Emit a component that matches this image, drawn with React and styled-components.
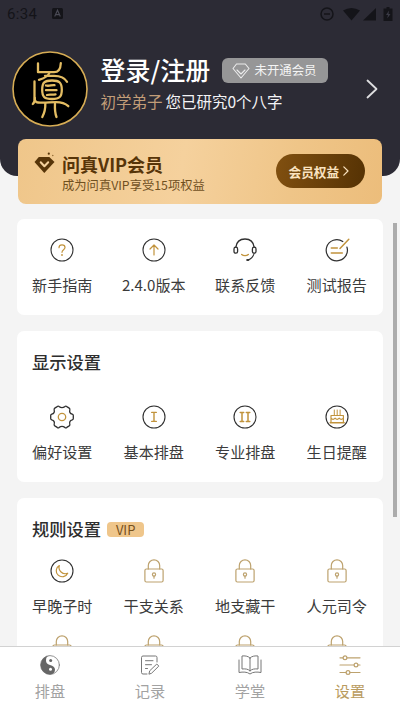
import React from "react";
import styled, { createGlobalStyle } from "styled-components";

const GlobalStyle = createGlobalStyle`
  * { box-sizing: border-box; }
  body {
    margin: 0;
    background: #f4f4f4;
    font-family: "Noto Sans CJK SC", sans-serif;
  }
  svg { display: block; flex: none; overflow: visible; }
`;

const Screen = styled.div`
  width: 400px;
  height: 710px;
  display: flex;
  flex-direction: column;
  overflow: hidden;
  background: #f4f4f4;
`;

const Header = styled.header`
  flex: none;
  height: 176px;
  border-radius: 0 0 17px 17px;
  background: #2c2b35;
`;

const StatusBar = styled.div`
  height: 28px;
  display: flex;
  align-items: center;
  padding: 0 7px 1px;
  color: #141419;
`;

const Clock = styled.span`
  width: 45px;
  font: 400 15px/20px Roboto, sans-serif;
  letter-spacing: 0.3px;
`;

const StatusIcons = styled.div`
  margin-left: auto;
  display: flex;
`;

const Profile = styled.div`
  display: flex;
  align-items: center;
  padding: 23px 22px 0 12px;
`;

const ProfileText = styled.div`
  flex: 1;
  margin-left: 12.5px;
  padding-bottom: 13px;
`;

const NameRow = styled.div`
  display: flex;
  align-items: center;
  height: 38px;
`;

const Name = styled.h1`
  margin: -3px 0 0;
  width: 121px;
  color: #fff;
  font-size: 25px;
  font-weight: 500;
  line-height: 38px;
  white-space: nowrap;
`;

const MemberTag = styled.span`
  display: flex;
  align-items: center;
  gap: 5px;
  width: 106px;
  height: 25px;
  padding-left: 10px;
  border-radius: 6px;
  background: #969697;
  color: #f4f4f4;
  font-size: 12.4px;
  line-height: 25px;
  white-space: nowrap;
`;

const Summary = styled.p`
  margin: -1px 0 0;
  color: #f3f3f5;
  font-size: 15.5px;
  line-height: 25px;
  white-space: nowrap;
`;

const Rank = styled.span`
  margin-right: 3px;
  color: #c29d78;
`;

const Banner = styled.section`
  flex: none;
  display: flex;
  align-items: flex-start;
  height: 65px;
  margin: -37px 18px 0;
  padding: 13px 17px 0 16px;
  border-radius: 8px;
  background: linear-gradient(100deg, #efc68a 0%, #f5d19d 45%, #efc588 75%, #ecbd7b 100%);
  color: #573509;
`;

const BannerText = styled.div`
  flex: 1;
  margin: -1px 0 0 7px;
  white-space: nowrap;
`;

const BannerTitle = styled.div`
  font-size: 18px;
  font-weight: 700;
  line-height: 26px;
`;

const BannerNote = styled.div`
  margin-top: -1px;
  color: #70501f;
  font-size: 12.3px;
  line-height: 18px;
`;

const BenefitsButton = styled.button`
  display: flex;
  align-items: center;
  gap: 4px;
  width: 89px;
  height: 34px;
  margin-top: 2px;
  padding: 0 0 0 12.5px;
  border: 0;
  border-radius: 17px;
  background: linear-gradient(100deg, #815010, #553204);
  color: #fae3c0;
  font: 700 12.7px/35px "Noto Sans CJK SC", sans-serif;
  white-space: nowrap;
`;

const Body = styled.main`
  flex: 1;
  min-height: 0;
  display: flex;
  align-items: flex-start;
  overflow: hidden;
`;

const Cards = styled.div`
  width: 366.5px;
  margin: 15px 0 0 16.5px;
`;

const Card = styled.section`
  height: ${(p) => p.$height}px;
  margin-bottom: 16px;
  border-radius: 7px;
  background: #fff;
`;

const CardTitle = styled.h2`
  display: flex;
  align-items: flex-start;
  gap: 6px;
  height: ${(p) => p.$height}px;
  margin: 0;
  padding: 18px 0 0 15.5px;
  color: #2e2e2e;
  font-size: 17.3px;
  font-weight: 500;
  line-height: 26px;
`;

const VipTag = styled.span`
  width: 37px;
  height: 15px;
  margin-top: 6px;
  border-radius: 4px;
  background: #efc68b;
  color: #76501b;
  font-size: 13px;
  font-weight: 400;
  line-height: 15px;
  text-align: center;
`;

const Grid = styled.div`
  display: grid;
  grid-template-columns: repeat(4, 1fr);
  row-gap: 17px;
  padding: ${(p) => p.$top || 0}px 0.5px 0 0;
`;

const Item = styled.div`
  display: flex;
  flex-direction: column;
  align-items: center;
  height: 59px;
`;

const ItemLabel = styled.span`
  margin-top: 10px;
  color: #3b3b3b;
  font-size: 15.1px;
  line-height: 24px;
  white-space: nowrap;
`;

const ScrollThumb = styled.div`
  width: 4px;
  height: 294px;
  margin: 19px 0 0 10px;
  background: #acacac;
`;

const TabBar = styled.nav`
  flex: none;
  height: 64px;
  display: grid;
  grid-template-columns: repeat(4, 1fr);
  border-top: 1px solid #d2d2d2;
  background: #fff;
`;

const Tab = styled.div`
  display: flex;
  flex-direction: column;
  align-items: center;
  padding-top: 8px;
  color: ${(p) => (p.$active ? "#b99b60" : "#a2a2a2")};
  font-size: 15.2px;
  line-height: 22px;
`;

const TabLabel = styled.span`
  margin-top: 4px;
`;

const INK = "#303030";
const GOLD = "#c1933c";
const PALE = "#bda26e";

const Icon = ({ children, w = 24, h = 24 }) => (
  <svg width={w} height={h} viewBox={`0 0 ${w} ${h}`} fill="none" strokeLinecap="round" strokeLinejoin="round">
    {children}
  </svg>
);

const Ring = () => <circle cx="12" cy="12" r="11" stroke={INK} strokeWidth="1.1" />;

const HelpIcon = () => (
  <Icon>
    <Ring />
    <path d="M9 9.7C9 7.8 10.3 6.9 12 6.9s3 1 3 2.6c0 2.2-3 2.2-3 4.8" stroke={GOLD} strokeWidth="1.2" />
    <circle cx="12" cy="17" r=".9" fill={GOLD} />
  </Icon>
);

const UpIcon = () => (
  <Icon>
    <Ring />
    <path d="M12 17V7.2M8 11l4-4 4 4" stroke={GOLD} strokeWidth="1.2" />
  </Icon>
);

const HeadsetIcon = () => (
  <Icon>
    <path d="M2.8 9.3C3.5 4.1 7 1 12 1s8.5 3.1 9.2 8.3" stroke={INK} strokeWidth="1.3" />
    <rect x="1" y="9.2" width="3.6" height="6" rx="1.7" stroke={INK} strokeWidth="1.3" />
    <rect x="19.4" y="9.2" width="3.6" height="6" rx="1.7" stroke={INK} strokeWidth="1.3" />
    <path d="M21 15.5c-.6 3-3 5.5-6 6.5" stroke={INK} strokeWidth="1.1" />
    <ellipse cx="14.8" cy="22" rx="1.7" ry="1" fill={INK} />
    <path d="M8.7 16.5c1.7 1.500 4.900 1.500 6.600 0" stroke={GOLD} strokeWidth="1.4" />
  </Icon>
);

const ReportIcon = () => (
  <Icon>
    <path d="M17.800 3.500A10.600 10.600 0 1 0 21.900 9" stroke={INK} strokeWidth="1.2" />
    <path d="M6.300 10h6M6.300 15h11M15 10.500 23.800 1.300" stroke={GOLD} strokeWidth="1.500" />
  </Icon>
);

const GearIcon = () => (
  <Icon>
    <path
      d="M7.200 1.600q1-.8 2 0 2.800 2 5.600 0 1-.8 2 0l2.400 1.500q1 .7.600 2-.8 3.200 2.400 4 1.100.4 1.100 1.500v2.800q0 1.100-1.100 1.500-3.200.8-2.400 4 .4 1.300-.6 2l-2.400 1.500q-1 .8-2 0-2.800-2-5.600 0-1 .8-2 0l-2.400-1.500q-1-.7-.6-2 .8-3.200-2.400-4Q.7 14.500.7 13.400v-2.800q0-1.100 1.100-1.500 3.200-.8 2.400-4-.4-1.300.6-2z"
      stroke={INK}
      strokeWidth="1.3"
    />
    <circle cx="12" cy="12" r="3.7" stroke={GOLD} strokeWidth="1.3" />
  </Icon>
);

const OneIcon = () => (
  <Icon>
    <Ring />
    <path d="M12 7.400v9M9.700 7.400h4.600M9.700 16.400h4.600" stroke={GOLD} strokeWidth="1.4" />
  </Icon>
);

const TwoIcon = () => (
  <Icon>
    <Ring />
    <path d="M9 7.400v9M15 7.400v9M7.200 7.400h3.500M13.300 7.400h3.500M7.200 16.400h3.500M13.300 16.400h3.500" stroke={GOLD} strokeWidth="1.5" />
  </Icon>
);

const CakeIcon = () => (
  <Icon>
    <Ring />
    <path d="M6 10.500h12.400v7H6zM6 13.200q2 2.200 4.100 0 2 2.200 4.100 0 2 2.200 4.200 0" stroke={GOLD} strokeWidth="1.2" />
    <path d="M9.300 5v5M12.200 5v5M15.100 5v5" stroke={GOLD} strokeWidth="1" />
    <path d="M5.200 17.700h14" stroke={GOLD} strokeWidth="1.4" />
  </Icon>
);

const MoonIcon = () => (
  <Icon>
    <Ring />
    <path d="M9.300 6.500A6 6 0 1 0 17.700 14.200 6.300 6.300 0 0 1 9.300 6.500Z" stroke={GOLD} strokeWidth="1.2" />
  </Icon>
);

const LockIcon = () => (
  <Icon>
    <rect x="2.900" y="10" width="18.200" height="13" rx="1.500" stroke={PALE} strokeWidth="1.2" />
    <path d="M6.300 10V6.500a5.700 5.700 0 0 1 11.400 0V10" stroke={PALE} strokeWidth="1.2" />
    <circle cx="12" cy="15.500" r="1.600" stroke={PALE} strokeWidth="1.2" />
    <path d="M12 17.200v2" stroke={PALE} strokeWidth="1.2" />
  </Icon>
);

const Emblem = () => (
  <svg width="76" height="76" viewBox="0 0 76 76" fill="none" strokeLinecap="round" strokeLinejoin="round">
    <circle cx="38" cy="38" r="37" fill="#000" stroke="#d7ad55" strokeWidth="1.6" />
    <g stroke="#e4bd63" strokeWidth="2.300">
      <path d="M26 12.500v8.700h16c4 0 6.500-2 6.800-9" />
      <path d="M37.500 21.500c-1 3.500-4 5.500-10.500 7.300" />
      <path d="M33 24.800h9c6 0 10.500 1.500 13 6" />
      <path d="M22.500 30.500v15.500c0 3 .5 5.500 3.500 5.500 6 .6 12-.3 18-.3 5 0 9 1 12.300 4" />
      <path d="M22.800 47c0 2.500-.3 4.500-2 6" />
      <path d="M40 29.500c-7.500 0-9.800 2-9.800 9.300S32.500 48 40 48s9.800-2.200 9.800-9.200-2.300-9.300-9.800-9.300Z" />
      <path d="M34 34.500c3 1 6-.8 8.500-.3M34 39.200h10.500M35 44c3-.8 5.500.2 8.500-.6" />
      <path d="M33.300 52.500c.2 5-.6 9-3 13.500M43 52.500c-.3 5 0 9.500 1.500 13.500" />
    </g>
  </svg>
);

const DiamondOutline = () => (
  <Icon w={18} h={16}>
    <path d="M4.500 1h8.800L17 5.500 9 15 1 5.500ZM5 7l4 4 4-4" stroke="#ececec" strokeWidth="1.1" />
  </Icon>
);

const DiamondSolid = () => (
  <Icon w={21} h={22}>
    <path d="M4.800 5h10.500L20.500 10 10.300 21 .5 10Z" fill="#573509" />
    <path d="m6.700 10.300 3.700 4 3.800-4" stroke="#f5d19d" strokeWidth="2" />
    <circle cx="14.800" cy="1.700" r="1.100" fill="#573509" />
    <circle cx="18.800" cy="3.500" r=".7" fill="#8b642e" />
  </Icon>
);

const StatusSet = () => (
  <svg width="75" height="16" viewBox="0 0 75 16" fill="none">
    <circle cx="9" cy="8" r="6" stroke="#141419" strokeWidth="1.5" />
    <path d="M6 8h6" stroke="#141419" strokeWidth="1.5" />
    <path d="M25 4.500q8.500-5 17 0L33.500 14.500Z" fill="#141419" />
    <path d="M58 2v12.500H45Z" fill="#141419" />
    <path d="M68.500 1h3v1.500h3V15h-9V2.500h3Z" fill="#141419" />
    <path d="M71 4.500 68 9h2l-.8 3.500L72.500 8h-2Z" fill="#3a3a45" />
  </svg>
);

const KeyboardBadge = () => (
  <svg width="11" height="11" viewBox="0 0 11 11" fill="none">
    <rect width="11" height="11" rx="1.5" fill="#141419" />
    <path d="m2.700 8.500 2.800-6.300 2.800 6.300M3.800 6.600h3.400" stroke="#4a4a55" strokeWidth="1.1" />
  </svg>
);

const YinYangIcon = () => (
  <Icon w={20} h={20}>
    <circle cx="10" cy="10" r="9.400" stroke="#777" strokeWidth=".8" />
    <path d="M10 .6A9.400 9.400 0 0 0 10 19.400c3.200.2 5-2 5-4.600C15 12 13 11 10 10S6 8 6 5.200C6 2.500 7.500.8 10 .6Z" fill="#666" />
    <circle cx="10.700" cy="5.500" r="1.500" fill="#666" />
    <circle cx="10.500" cy="14.300" r="1.500" fill="#fff" />
  </Icon>
);

const NoteIcon = () => (
  <Icon w={20} h={20}>
    <g stroke="#777" strokeWidth="1">
      <path d="M17 7V2.500A1.500 1.500 0 0 0 15.500 1H3A1.500 1.500 0 0 0 1.500 2.500v15A1.500 1.500 0 0 0 3 19h4M5.500 5.700H13M5.500 9.700h6M5.500 13.500h2" />
      <path d="m9 18.800.7-3L16.800 9l2 2.100-7 6.900Z" />
    </g>
  </Icon>
);

const BookIcon = () => (
  <Icon w={24} h={20}>
    <g stroke="#777" strokeWidth="1">
      <path d="M12 3C10 .8 6.500.7 4 1v13c3-.3 6-.2 8 2 2-2.200 5-2.300 8-2V1c-2.500-.3-6-.2-8 2Zm0 0v13" />
      <path d="M1 5v12.500c4-.7 8-.8 11 1.500 3-2.300 7-2.200 11-1.500V5" />
    </g>
  </Icon>
);

const SlidersIcon = () => (
  <Icon w={22} h={20}>
    <g stroke={PALE} strokeWidth="1.2">
      <path d="M1 2.800h3M8 2.800h13M1 10h14M19 10h2M1 17.500h6M11 17.500h10" />
      <circle cx="6" cy="2.800" r="1.900" />
      <circle cx="17" cy="10" r="1.900" />
      <circle cx="9" cy="17.500" r="1.900" />
    </g>
  </Icon>
);

const Entry = ({ icon, label }) => (
  <Item>
    {icon}
    {label && <ItemLabel>{label}</ItemLabel>}
  </Item>
);

export default function App() {
  return (
    <>
      <GlobalStyle />
      <Screen>
        <Header>
          <StatusBar>
            <Clock>6:34</Clock>
            <KeyboardBadge />
            <StatusIcons>
              <StatusSet />
            </StatusIcons>
          </StatusBar>
          <Profile>
            <Emblem />
            <ProfileText>
              <NameRow>
                <Name>登录/注册</Name>
                <MemberTag>
                  <DiamondOutline />
                  未开通会员
                </MemberTag>
              </NameRow>
              <Summary>
                <Rank>初学弟子</Rank>您已研究0个八字
              </Summary>
            </ProfileText>
            <Icon w={12} h={20}>
              <path d="m1.500 1.500 9 8.500-9 8.500" stroke="#dedee0" strokeWidth="1.8" />
            </Icon>
          </Profile>
        </Header>
        <Banner>
          <DiamondSolid />
          <BannerText>
            <BannerTitle>问真VIP会员</BannerTitle>
            <BannerNote>成为问真VIP享受15项权益</BannerNote>
          </BannerText>
          <BenefitsButton>
            会员权益
            <Icon w={6} h={10}>
              <path d="M.8.8 5 5 .8 9.200" stroke="#fae3c0" strokeWidth="1.2" />
            </Icon>
          </BenefitsButton>
        </Banner>
        <Body>
          <Cards>
            <Card $height={96}>
              <Grid $top={19}>
                <Entry icon={<HelpIcon />} label="新手指南" />
                <Entry icon={<UpIcon />} label="2.4.0版本" />
                <Entry icon={<HeadsetIcon />} label="联系反馈" />
                <Entry icon={<ReportIcon />} label="测试报告" />
              </Grid>
            </Card>
            <Card $height={151}>
              <CardTitle $height={74}>显示设置</CardTitle>
              <Grid>
                <Entry icon={<GearIcon />} label="偏好设置" />
                <Entry icon={<OneIcon />} label="基本排盘" />
                <Entry icon={<TwoIcon />} label="专业排盘" />
                <Entry icon={<CakeIcon />} label="生日提醒" />
              </Grid>
            </Card>
            <Card $height={220}>
              <CardTitle $height={61}>
                规则设置<VipTag>VIP</VipTag>
              </CardTitle>
              <Grid>
                <Entry icon={<MoonIcon />} label="早晚子时" />
                <Entry icon={<LockIcon />} label="干支关系" />
                <Entry icon={<LockIcon />} label="地支藏干" />
                <Entry icon={<LockIcon />} label="人元司令" />
                <Entry icon={<LockIcon />} />
                <Entry icon={<LockIcon />} />
                <Entry icon={<LockIcon />} />
                <Entry icon={<LockIcon />} />
              </Grid>
            </Card>
          </Cards>
          <ScrollThumb />
        </Body>
        <TabBar>
          <Tab>
            <YinYangIcon />
            <TabLabel>排盘</TabLabel>
          </Tab>
          <Tab>
            <NoteIcon />
            <TabLabel>记录</TabLabel>
          </Tab>
          <Tab>
            <BookIcon />
            <TabLabel>学堂</TabLabel>
          </Tab>
          <Tab $active>
            <SlidersIcon />
            <TabLabel>设置</TabLabel>
          </Tab>
        </TabBar>
      </Screen>
    </>
  );
}
